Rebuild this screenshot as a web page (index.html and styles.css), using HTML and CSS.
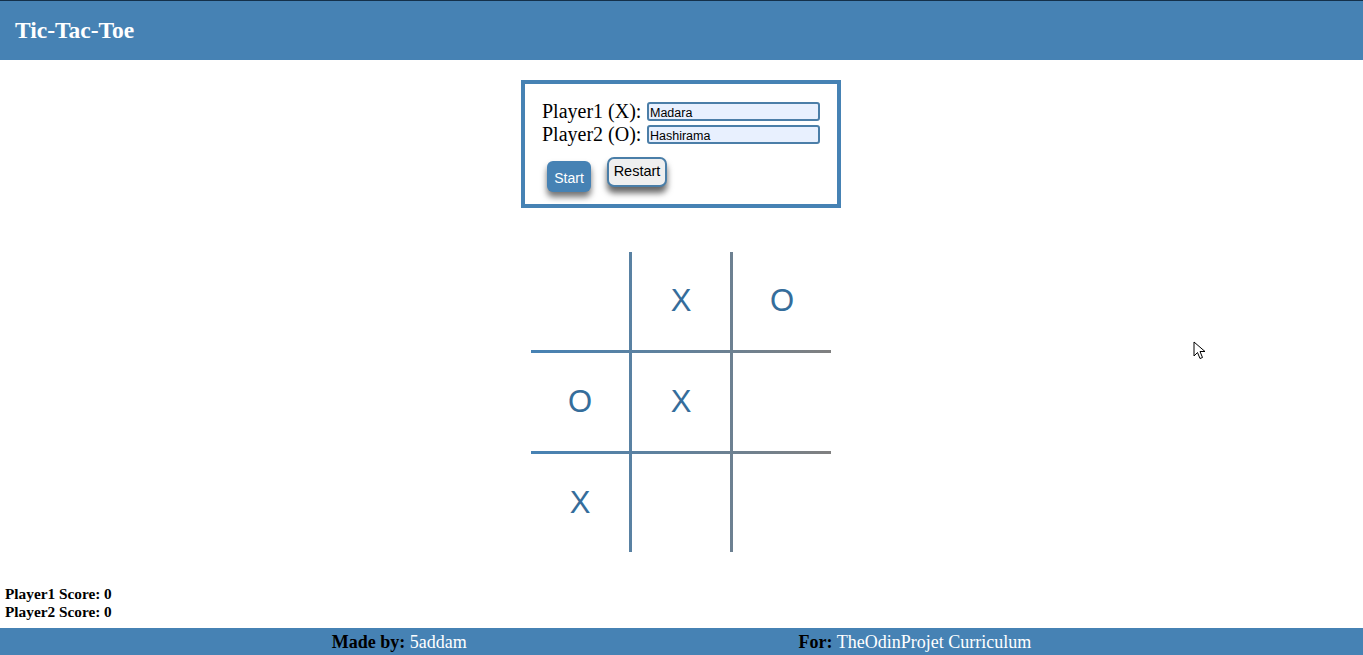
FILE: index.html
```html
<!DOCTYPE html>
<html lang="en">
<head>
<meta charset="utf-8">
<title>Tic-Tac-Toe</title>
<link rel="stylesheet" href="styles.css">
</head>
<body>
<header class="topbar"><h1 class="title">Tic-Tac-Toe</h1></header>
<main class="main">
  <form class="panel">
    <div class="row"><label class="label" for="p1">Player1 (X):</label><input class="name" id="p1" value="Madara"></div>
    <div class="row"><label class="label" for="p2">Player2 (O):</label><input class="name" id="p2" value="Hashirama"></div>
    <div class="buttons">
      <button type="button" class="btn btn-start">Start</button>
      <button type="button" class="btn btn-restart">Restart</button>
    </div>
  </form>
  <div class="board">
    <div class="cell"></div>
    <div class="cell">X</div>
    <div class="cell">O</div>
    <div class="cell">O</div>
    <div class="cell">X</div>
    <div class="cell"></div>
    <div class="cell">X</div>
    <div class="cell"></div>
    <div class="cell"></div>
  </div>
  <div class="scores">
    <div class="score">Player1 Score: 0</div>
    <div class="score">Player2 Score: 0</div>
  </div>
</main>
<footer class="footer">
  <span class="credit"><span class="key">Made by:</span> 5addam</span>
  <span class="credit"><span class="key">For:</span> TheOdinProjet Curriculum</span>
</footer>
<svg class="cursor" width="14" height="20" viewBox="0 0 14 20"><path d="M1 1 L1 15 L4.5 11.5 L7 17.5 L9.5 16.5 L7 10.5 L12 10.5 Z" fill="#fff" stroke="#000" stroke-width="1"/></svg>
</body>
</html>
```
FILE: styles.css
```css
html, body { margin: 0; padding: 0; background: #fff; }
body { position: relative; height: 655px; overflow: hidden; font-family: "Liberation Serif", "Times New Roman", serif; }

.topbar {
  background: #4682b4;
  border-top: 1px solid #14304a;
  height: 59px;
  display: flex;
  align-items: center;
  padding-left: 15px;
}
.title { margin: 0; color: #fff; font-size: 23.5px; font-weight: bold; }

.main { display: flex; flex-direction: column; align-items: center; padding-right: 1px; }

.panel {
  margin-top: 20px;
  width: 278px;
  border: 4px solid #4682b4;
  padding: 16px 17px 12px 17px;
}
.row { display: flex; align-items: center; height: 23px; }
.label { font-size: 20px; color: #000; width: 105px; white-space: nowrap; }
.name {
  box-sizing: border-box;
  width: 173px;
  height: 19px;
  border: 2px solid #4b7ea8;
  border-radius: 3px;
  background: #e8f0fe;
  font-family: "Liberation Sans", Arial, sans-serif;
  font-size: 12.5px;
  padding: 2px 1px 0;
  color: #000;
}
.buttons { display: flex; align-items: flex-start; margin-top: 11px; }
.btn { font-family: "Liberation Sans", Arial, sans-serif; cursor: pointer; }
.btn-start {
  margin-top: 4px;
  margin-left: 5px;
  width: 44px;
  height: 31px;
  background: #4682b4;
  color: #fff;
  border: none;
  border-radius: 6px;
  font-size: 14px;
  padding: 2px 0 0;
  box-shadow: 0 5px 6px rgba(0,0,0,0.55);
}
.btn-restart {
  margin-left: 16px;
  width: 60px;
  height: 30px;
  background: #efefef;
  color: #000;
  border: 2px solid #4a7ea8;
  border-radius: 7px;
  font-size: 14.5px;
  padding: 0 0 3px;
  box-shadow: 0 6px 6px rgba(0,0,0,0.6);
}

.board {
  margin-top: 44px;
  width: 300px;
  height: 300px;
  display: grid;
  grid-template-columns: repeat(3, 98px);
  grid-template-rows: repeat(3, 98px);
  gap: 3px;
  background: linear-gradient(to right, #4682b4, #808080);
}
.cell {
  background: #fff;
  display: flex;
  align-items: center;
  justify-content: center;
  font-family: "Liberation Sans", Arial, sans-serif;
  font-size: 31px;
  color: #356d9b;
}

.scores { align-self: stretch; margin-top: 33px; padding-left: 5px; }
.score { font-size: 15.3px; font-weight: bold; line-height: 18px; color: #000; }

.footer {
  margin-top: 7px;
  background: #4682b4;
  height: 28px;
  display: flex;
  justify-content: space-evenly;
  align-items: center;
  font-size: 18px;
  color: #fff;
}
.key { color: #000; font-weight: bold; }

.cursor { position: absolute; left: 1193px; top: 341px; }
```
